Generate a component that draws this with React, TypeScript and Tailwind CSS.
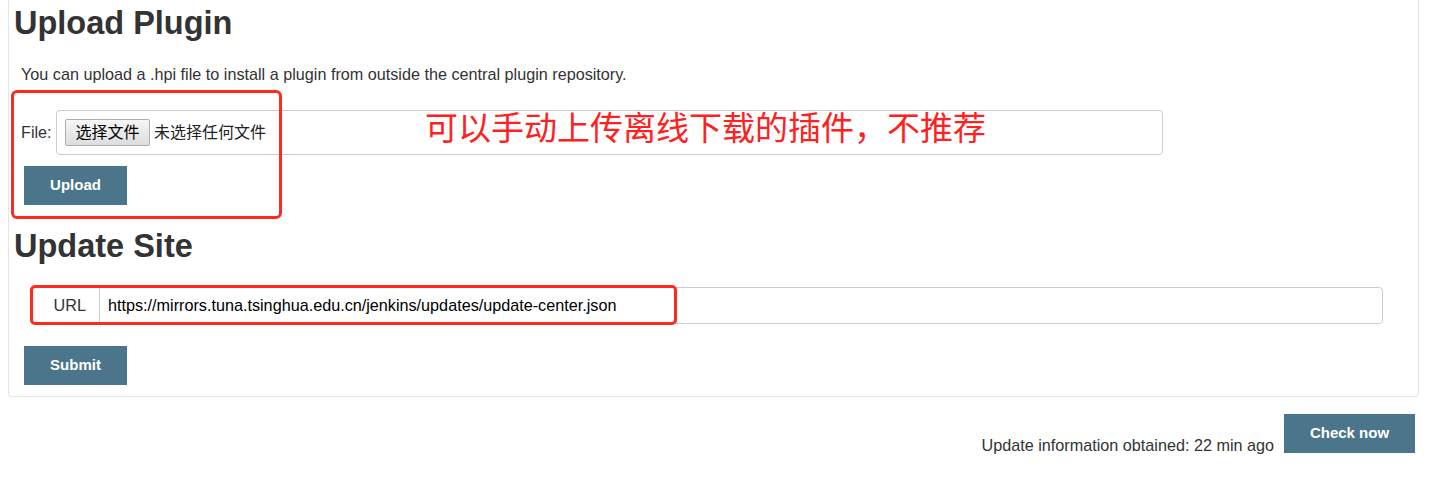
const sans = "font-['Liberation_Sans','Noto_Sans_CJK_SC',sans-serif]";

function ActionButton({ label, className = "" }: { label: string; className?: string }) {
  return (
    <button
      type="button"
      className={[
        "flex h-[39px] items-center justify-center bg-[#4b758b] text-[15px] font-bold text-white",
        className,
      ].join(" ")}
    >
      {label}
    </button>
  );
}

export default function App() {
  return (
    <div className={`relative h-[480px] w-[1433px] overflow-hidden bg-white text-[#333] ${sans}`}>
      <section className="ml-2 w-[1411px] rounded-b-[4px] border border-t-0 border-[#e6e6e6] pb-[11px]">
        <h1 className="pl-[5px] pt-[6px] text-[32.5px] font-bold leading-[35px]">Upload Plugin</h1>
        <p className="mt-[23px] pl-3 text-[16.2px] leading-[20px]">
          You can upload a .hpi file to install a plugin from outside the central plugin repository.
        </p>

        <div className="mt-[26px] flex items-center pl-3">
          <span className="w-[35px] text-[16.2px]">File:</span>
          <div className="flex h-[45px] w-[1107px] items-center gap-1 rounded-[4px] border border-[#ccc] pl-2">
            <button
              type="button"
              className="h-[27px] w-[85px] rounded-[2px] border border-[#adadad] bg-gradient-to-b from-[#f6f6f6] to-[#dddddd] text-[16px] leading-none text-black"
            >
              选择文件
            </button>
            <span className="text-[16px] text-[#222]">未选择任何文件</span>
          </div>
        </div>

        <ActionButton label="Upload" className="ml-[15px] mt-[11px] w-[103px]" />

        <h2 className="mt-[24px] pl-[5px] text-[32.5px] font-bold leading-[35px]">Update Site</h2>

        <div className="ml-[21px] mt-[23px] flex h-[37px] w-[1353px] rounded-[4px] border border-[#ccc] text-[16.2px]">
          <span className="flex w-[69px] items-center justify-end border-r border-[#ccc] pr-[13px] text-[#333]">
            URL
          </span>
          <span className="flex items-center pl-2 text-black">
            https://mirrors.tuna.tsinghua.edu.cn/jenkins/updates/update-center.json
          </span>
        </div>

        <ActionButton label="Submit" className="ml-[15px] mt-[22px] w-[103px]" />
      </section>

      <div className="mt-[17px] flex items-end justify-end gap-[10px] pr-[18px]">
        <span className="text-[16.2px] leading-[16px]">Update information obtained: 22 min ago</span>
        <ActionButton label="Check now" className="w-[131px]" />
      </div>

      {/* annotations drawn over the screenshot */}
      <div className="pointer-events-none absolute left-[11px] top-[90px] h-[129px] w-[271px] rounded-[6px] border-[3px] border-[#ff2a1f]" />
      <div className="pointer-events-none absolute left-[30px] top-[285px] h-[40px] w-[647px] rounded-[5px] border-[3px] border-[#ff2a1f]" />
      <div className="pointer-events-none absolute left-[425px] top-[110px] text-[33px] leading-[33px] text-[#ff2020] font-['Noto_Sans_CJK_SC',sans-serif]">
        可以手动上传离线下载的插件，不推荐
      </div>
    </div>
  );
}
